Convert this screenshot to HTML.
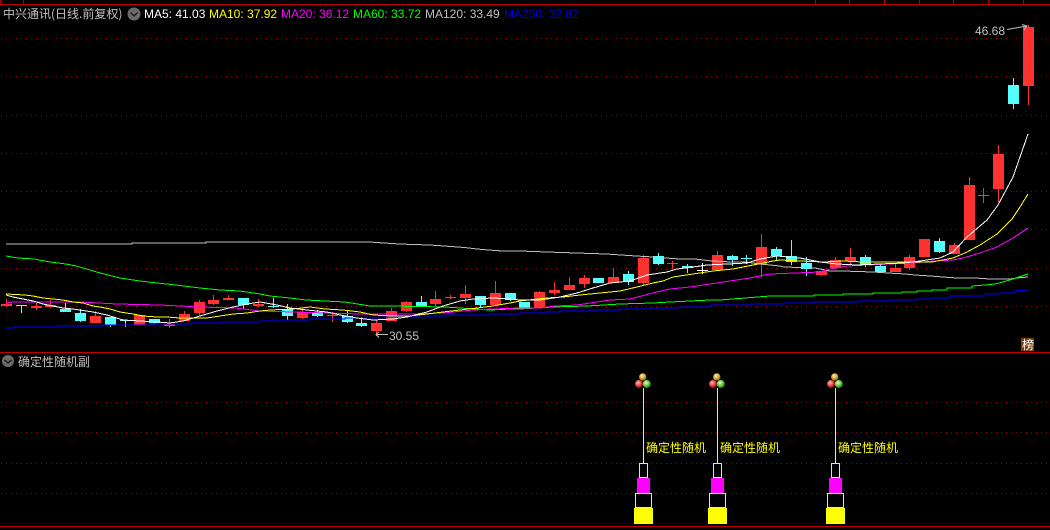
<!DOCTYPE html>
<html lang="zh">
<head>
<meta charset="utf-8">
<style>
html,body{margin:0;padding:0;background:#000;width:1050px;height:530px;overflow:hidden}
svg{display:block;position:absolute;left:0;top:0}
text{font-family:"Liberation Sans","WenQuanYi Zen Hei","Noto Sans CJK SC",sans-serif;font-size:12px}
.cn{font-family:"WenQuanYi Zen Hei","Noto Sans CJK SC",sans-serif;font-size:12px}
.l{fill:none;stroke-width:1;shape-rendering:crispEdges}
.g{stroke:#a00000;stroke-width:1;stroke-dasharray:1 4;shape-rendering:crispEdges}
</style>
</head>
<body>
<svg width="1050" height="530" viewBox="0 0 1050 530" xmlns="http://www.w3.org/2000/svg">
<defs>
<radialGradient id="by" cx=".4" cy=".35" r=".7"><stop offset="0" stop-color="#fff2b0"/><stop offset=".6" stop-color="#c8a030"/><stop offset="1" stop-color="#705010"/></radialGradient>
<radialGradient id="br" cx=".4" cy=".35" r=".7"><stop offset="0" stop-color="#ffc0b0"/><stop offset=".6" stop-color="#e03030"/><stop offset="1" stop-color="#801010"/></radialGradient>
<radialGradient id="bg" cx=".4" cy=".35" r=".7"><stop offset="0" stop-color="#e8ffc0"/><stop offset=".6" stop-color="#50c030"/><stop offset="1" stop-color="#207010"/></radialGradient>
</defs>
<rect width="1050" height="530" fill="#000"/>
<!-- frame -->
<path fill="#c00000" d="M0 4h1050v1h-1050zM0 352h1050v1h-1050zM0 526h1050v1h-1050zM0 0h1v4h-1zM23 0h1v4h-1zM815 0h1v4h-1zM849 0h1v4h-1zM884 0h1v4h-1zM919 0h1v4h-1zM953 0h1v4h-1zM988 0h1v4h-1zM1023 0h1v4h-1z"/>
<!-- grid -->
<path class="g" d="M1 38.5H1050M1 76.5H1050M1 115.5H1050M1 153.5H1050M1 191.5H1050M1 229.5H1050M1 268.5H1050M1 306.5H1050M1 402.5H1050M1 432.5H1050M1 463.5H1050M1 493.5H1050"/>
<!-- red candles -->
<path fill="#ff3232" d="M1 304h11v2h-11zM6 299h1v8h-1z
M31 306h11v2h-11zM36 303h1v7h-1z
M45 305h11v2h-11zM50 300h1v8h-1z
M90 316h11v7h-11zM95 311h1v12h-1z
M134 315h11v10h-11z
M164 324h11v2h-11zM169 319h1v9h-1z
M179 314h11v7h-11zM184 311h1v10h-1z
M194 302h11v11h-11zM199 300h1v15h-1z
M208 300h11v4h-11zM213 295h1v10h-1z
M223 298h11v2h-11zM228 295h1v5h-1z
M253 304h11v2h-11zM258 299h1v8h-1z
M297 312h11v6h-11zM302 308h1v11h-1z
M327 315h11v1h-11zM332 312h1v10h-1z
M371 323h11v8h-11zM376 320h1v16h-1z
M386 311h11v10h-11zM391 308h1v13h-1z
M401 302h11v9h-11zM406 301h1v11h-1z
M430 299h11v5h-11zM435 291h1v16h-1z
M445 297h11v1h-11zM450 295h1v4h-1z
M460 294h11v4h-11zM465 285h1v19h-1z
M490 293h11v12h-11zM495 281h1v24h-1z
M534 292h11v16h-11zM539 291h1v17h-1z
M549 290h11v3h-11zM554 282h1v13h-1z
M564 285h11v5h-11zM569 277h1v13h-1z
M579 278h11v6h-11zM584 275h1v13h-1z
M608 277h11v6h-11zM613 268h1v15h-1z
M638 258h11v25h-11zM643 255h1v30h-1z
M667 263h11v1h-11zM672 261h1v8h-1z
M712 255h11v15h-11zM717 251h1v19h-1z
M756 247h11v17h-11zM761 234h1v43h-1z
M816 271h11v4h-11zM821 271h1v5h-1z
M830 260h11v8h-11zM835 257h1v12h-1z
M845 257h11v4h-11zM850 248h1v18h-1z
M890 268h11v4h-11zM895 264h1v8h-1z
M904 257h11v11h-11zM909 255h1v15h-1z
M919 239h11v18h-11z
M949 245h11v9h-11zM954 243h1v11h-1z
M964 185h11v55h-11zM969 177h1v63h-1z
M978 195h11v1h-11zM983 188h1v15h-1z
M993 154h11v35h-11zM998 145h1v57h-1z
M1023 27h11v59h-11zM1028 25h1v80h-1z"/>
<!-- cyan candles -->
<path fill="#54ffff" d="M16 305h11v1h-11zM21 305h1v8h-1z
M60 309h11v3h-11zM65 303h1v9h-1z
M75 313h11v8h-11zM80 309h1v13h-1z
M105 317h11v8h-11zM110 317h1v10h-1z
M120 320h11v1h-11zM125 320h1v7h-1z
M149 319h11v4h-11zM154 319h1v5h-1z
M238 298h11v7h-11zM243 298h1v11h-1z
M268 306h11v1h-11zM273 298h1v10h-1z
M282 309h11v7h-11zM287 304h1v16h-1z
M312 312h11v4h-11zM317 310h1v7h-1z
M342 316h11v6h-11zM347 311h1v12h-1z
M356 323h11v3h-11zM361 317h1v10h-1z
M416 302h11v4h-11zM421 296h1v10h-1z
M475 296h11v9h-11zM480 296h1v11h-1z
M505 293h11v7h-11zM510 293h1v8h-1z
M519 302h11v6h-11z
M593 278h11v5h-11z
M623 274h11v8h-11zM628 271h1v14h-1z
M653 256h11v8h-11zM658 253h1v12h-1z
M682 266h11v2h-11zM687 264h1v9h-1z
M727 256h11v4h-11zM732 255h1v11h-1z
M741 258h11v1h-11zM746 255h1v9h-1z
M771 249h11v7h-11zM776 247h1v13h-1z
M786 256h11v6h-11zM791 240h1v25h-1z
M801 263h11v6h-11zM806 257h1v19h-1z
M860 257h11v8h-11zM865 255h1v12h-1z
M875 266h11v6h-11zM880 264h1v9h-1z
M934 241h11v11h-11zM939 238h1v15h-1z
M1008 85h11v19h-11zM1013 78h1v31h-1z"/>
<path fill="#ffffff" d="M697 270h11v1h-11zM702 263h1v11h-1z"/>
<!-- MA250 -->
<polyline class="l" stroke="#0000ff" points="6,328 14,328 14,327 58,327 58,326 103,326 103,325 150,325 150,324 192,324 192,323 222,323 222,322 260,322 260,321 280,321 280,320 310,320 310,319 345,319 345,318 385,318 385,317 430,317 430,316 445,316 445,315 490,315 490,314 520,314 520,313 547,313 547,312 560,312 560,311 590,311 590,310 620,310 620,309 650,309 650,308 680,308 680,307 710,307 710,305 750,305 750,304 784,304 784,303 815,303 815,302 858,302 858,301 890,301 890,300 917,300 917,299 932,299 932,298 950,298 950,296 985,296 985,294 1000,294 1000,293 1015,293 1015,291 1028,290"/>
<!-- MA120 -->
<polyline class="l" stroke="#c0c0c0" points="6,244 132,244 132,243 206,243 206,242 369,242 384,243 399,244 429,245 444,246 458,247 469,248 477,249 488,250 503,251 520,251 547,252 577,253 606,254 621,255 636,256 653,257 665,258 680,259 695,259 712,261 732,262 746,262 760,264 780,266 784,267 815,268 830,271 843,271 873,272 888,273 905,274 915,275 930,276 943,277 957,278 975,278 990,279 1010,279 1017,278 1028,277"/>
<!-- MA60 -->
<polyline class="l" stroke="#00ff00" points="6,256 18,258 34,259 50,262 66,264 76,266 90,270 100,273 120,278 140,281 157,283 176,285 200,288 220,290 240,291 260,294 270,296 290,298 306,300 325,301 345,302 370,306 390,306 445,307 490,310 510,309 520,309 553,307 587,306 620,304 653,303 670,302 710,300 720,300 770,296 814,296 814,295 843,295 843,294 873,294 873,293 902,293 902,292 917,292 917,291 932,291 932,290 947,290 947,288 958,288 972,288 972,286 985,285 995,284 1003,282 1013,279 1028,274"/>
<!-- MA20 -->
<polyline class="l" stroke="#ff00ff" points="6,303 14,302 80,302 117,304 160,305 200,307 235,308 260,311 293,312 360,314 410,314 443,313 473,310 493,309 520,308 540,308 555,306 577,305 610,300 630,299 653,293 670,289 690,287 710,284 730,281 750,278 770,274 795,273 820,272 830,269 847,266 867,265 888,264 913,263 933,261 953,260 963,258 980,253 997,247 1013,238 1028,228"/>
<!-- MA10 -->
<polyline class="l" stroke="#ffff00" points="6,294 25,295 33,296 43,298 53,299 63,300 73,302 83,303 93,306 100,307 110,309 120,312 133,314 143,316 157,317 167,317 180,318 207,318 220,316 233,314 247,313 260,311 270,310 293,309 310,307 325,309 343,310 360,312 373,315 393,316 410,316 427,314 443,312 460,310 477,308 493,306 510,303 520,301 547,298 563,297 580,295 600,293 620,291 637,287 653,283 663,281 673,277 693,274 713,271 733,269 753,265 773,261 780,260 800,261 823,262 843,261 863,262 932,262 953,258 967,252 980,245 997,234 1007,224 1012,219 1020,207 1028,194"/>
<!-- MA5 -->
<polyline class="l" stroke="#ffffff" points="6,295 13,297 23,299 33,301 43,304 53,306 63,308 73,309 93,312 107,315 123,320 140,321 157,322 170,323 183,321 200,316 217,311 233,307 247,304 260,302 277,305 290,308 307,310 327,312 340,315 357,318 373,320 393,319 407,317 427,312 443,306 460,301 473,299 493,298 510,299 520,300 540,300 560,297 577,293 593,288 610,283 630,281 647,275 667,272 677,269 693,267 707,265 727,264 747,263 760,259 777,256 800,258 820,262 837,264 857,265 880,264 903,263 920,261 940,258 953,252 967,237 987,220 998,205 1013,177 1020,157 1028,134"/>
<!-- header -->
<text x="3" y="18" fill="#c0c0c0" class="cn">中兴通讯(日线.前复权)</text>
<circle cx="134" cy="14" r="6.500" fill="#6a6a6a"/>
<path d="M130.500 12.500l3.500 3.500l3.500-3.500" fill="none" stroke="#111" stroke-width="1.200"/>
<text x="144" y="18" fill="#ffffff">MA5: 41.03</text>
<text x="209" y="18" fill="#ffff00">MA10: 37.92</text>
<text x="281" y="18" fill="#ff00ff">MA20: 36.12</text>
<text x="353" y="18" fill="#00ff00">MA60: 33.72</text>
<text x="425" y="18" fill="#c0c0c0">MA120: 33.49</text>
<text x="504" y="18" fill="#0000e0">MA250: 32.82</text>
<!-- price labels -->
<text x="975" y="35" fill="#c0c0c0">46.68</text>
<path d="M1007 29.500L1027 26M1022 24.500l5 1.500l-3 4" fill="none" stroke="#c0c0c0" stroke-width="1"/>
<text x="389" y="340" fill="#c0c0c0">30.55</text>
<path d="M376.500 334.500H388M379 332l-3 2.500l3 3" fill="none" stroke="#c0c0c0" stroke-width="1"/>
<rect x="1021" y="338" width="13" height="13" fill="#7a3e0c"/>
<text x="1022" y="349" fill="#ffffff" class="cn">榜</text>
<!-- sub pane title -->
<circle cx="8" cy="361" r="6" fill="#6a6a6a"/>
<path d="M4.500 360l3.500 3l3.500-3" fill="none" stroke="#111" stroke-width="1.200"/>
<text x="18" y="366" fill="#c0c0c0" class="cn">确定性随机副</text>
<!-- signal 1 -->
<g>
<path fill="#ffff00" d="M643 388h1v75h-1z"/>
<circle cx="642.800" cy="377" r="3.700" fill="url(#by)"/>
<circle cx="639" cy="384" r="4" fill="url(#br)"/>
<circle cx="646.800" cy="384" r="4" fill="url(#bg)"/>
<rect x="639.500" y="463.500" width="8" height="14" fill="none" stroke="#ffff00" shape-rendering="crispEdges"/>
<rect x="637" y="478" width="13" height="16" fill="#ff00ff"/>
<rect x="635.500" y="493.500" width="16" height="14" fill="none" stroke="#ffff00" shape-rendering="crispEdges"/>
<rect x="634" y="508" width="19" height="16" fill="#ffff00"/>
<text x="646" y="452" fill="#ffff00" class="cn">确定性随机</text>
</g>
<!-- signal 2 -->
<g transform="translate(74,0)">
<path fill="#ffff00" d="M643 388h1v75h-1z"/>
<circle cx="642.800" cy="377" r="3.700" fill="url(#by)"/>
<circle cx="639" cy="384" r="4" fill="url(#br)"/>
<circle cx="646.800" cy="384" r="4" fill="url(#bg)"/>
<rect x="639.500" y="463.500" width="8" height="14" fill="none" stroke="#ffff00" shape-rendering="crispEdges"/>
<rect x="637" y="478" width="13" height="16" fill="#ff00ff"/>
<rect x="635.500" y="493.500" width="16" height="14" fill="none" stroke="#ffff00" shape-rendering="crispEdges"/>
<rect x="634" y="508" width="19" height="16" fill="#ffff00"/>
<text x="646" y="452" fill="#ffff00" class="cn">确定性随机</text>
</g>
<!-- signal 3 -->
<g transform="translate(192,0)">
<path fill="#ffff00" d="M643 388h1v75h-1z"/>
<circle cx="642.800" cy="377" r="3.700" fill="url(#by)"/>
<circle cx="639" cy="384" r="4" fill="url(#br)"/>
<circle cx="646.800" cy="384" r="4" fill="url(#bg)"/>
<rect x="639.500" y="463.500" width="8" height="14" fill="none" stroke="#ffff00" shape-rendering="crispEdges"/>
<rect x="637" y="478" width="13" height="16" fill="#ff00ff"/>
<rect x="635.500" y="493.500" width="16" height="14" fill="none" stroke="#ffff00" shape-rendering="crispEdges"/>
<rect x="634" y="508" width="19" height="16" fill="#ffff00"/>
<text x="646" y="452" fill="#ffff00" class="cn">确定性随机</text>
</g>
</svg>
</body>
</html>
